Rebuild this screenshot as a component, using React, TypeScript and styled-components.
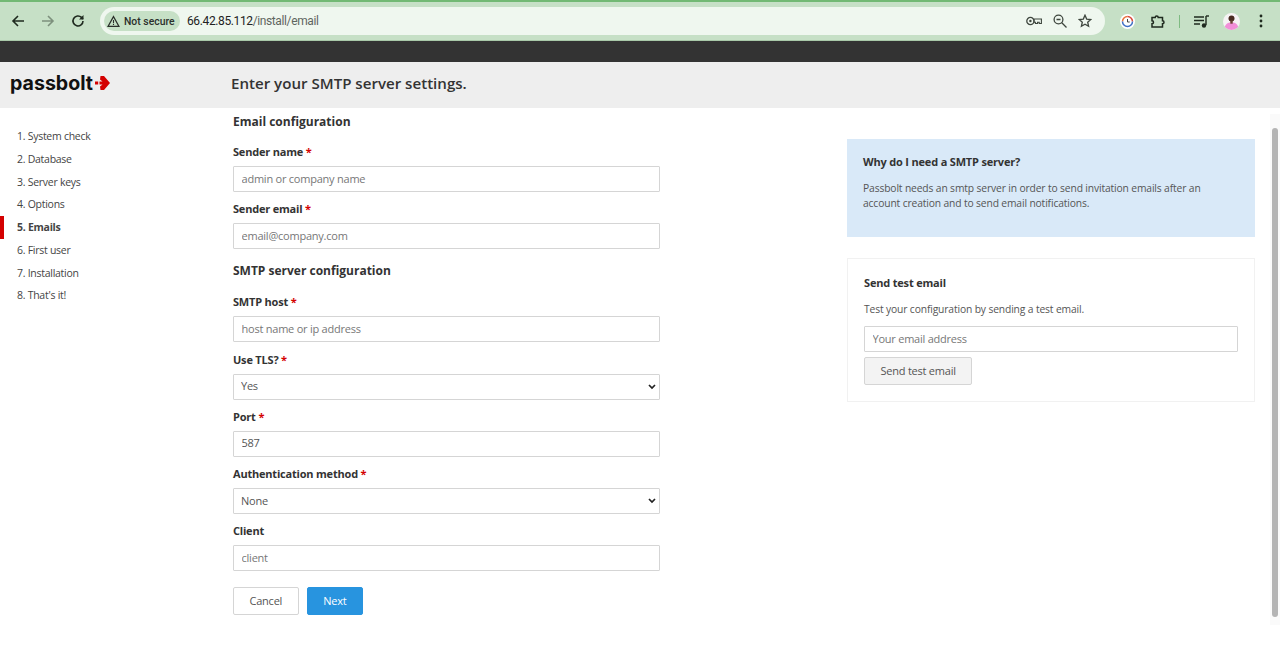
import React, { FC } from 'react';
import styled, { createGlobalStyle } from 'styled-components';

const GlobalStyle = createGlobalStyle`
  html, body {
    margin: 0;
    padding: 0;
    height: 100%;
    overflow: hidden;
    background: #fff;
  }
  * {
    box-sizing: border-box;
  }
  #root {
    font-family: "Open Sans", "Liberation Sans", sans-serif;
    color: #333;
  }
`;

const steps = ['System check', 'Database', 'Server keys', 'Options', 'Emails', 'First user', 'Installation', "That's it!"];

const chevron = `url("data:image/svg+xml,%3Csvg xmlns='http://www.w3.org/2000/svg' width='8' height='6' viewBox='0 0 8 6'%3E%3Cpath d='M1 1l3 3 3-3' fill='none' stroke='%23222' stroke-width='1.7'/%3E%3C/svg%3E")`;

const Page = styled.div`
  width: 1280px;
  height: 645px;
  display: flex;
  flex-direction: column;
  overflow: hidden;
`;

/* browser chrome */
const BrowserBar = styled.div`
  height: 41px;
  flex: none;
  background: #c6e0c6;
  border-top: 2px solid #72b974;
  border-bottom: 1px solid #a9c9a9;
  display: flex;
  align-items: center;
  padding: 0 8px 0 9px;
`;

const NavIcon = styled.svg<{ $gap?: number }>`
  width: 18px;
  height: 18px;
  flex: none;
  margin-right: ${({ $gap }) => $gap ?? 0}px;
  display: block;
`;

const Omnibox = styled.div`
  width: 1005px;
  height: 28px;
  border-radius: 14px;
  background: #eff7ef;
  display: flex;
  align-items: center;
  padding: 0 13px 0 4px;
  margin: 0 15px 0 0;
`;

const SecurityChip = styled.div`
  width: 76px;
  height: 20px;
  border-radius: 10px;
  background: #c6e0c6;
  display: flex;
  align-items: center;
  gap: 4px;
  padding: 0 0 0 3px;
  font-family: "Roboto", "Liberation Sans", sans-serif;
  font-size: 10.4px;
  font-weight: 500;
  color: #2b2f2b;
  white-space: nowrap;
`;

const Url = styled.div`
  margin-left: 7px;
  font-family: "Roboto", "Liberation Sans", sans-serif;
  font-size: 12px;
  letter-spacing: -0.38px;
  color: #5f665f;
  flex: 1;

  b {
    font-weight: 400;
    color: #222;
  }
`;

const OmniIcons = styled.div`
  display: flex;
  align-items: center;
  gap: 11px;
`;

const Divider = styled.div`
  width: 1px;
  height: 13px;
  background: #7fbb82;
  margin: 0 14px 0 13px;
`;

const Avatar = styled.svg`
  width: 17px;
  height: 17px;
  margin: 0 19px 0 14px;
  flex: none;
`;

const DarkStrip = styled.div`
  height: 21px;
  flex: none;
  background: #333;
`;

/* passbolt header */
const Header = styled.header`
  height: 46px;
  flex: none;
  background: #eee;
  display: flex;
  align-items: center;
  padding-bottom: 4px;
`;

const LogoBox = styled.div`
  width: 231px;
  flex: none;
  padding-left: 10px;
  display: flex;
  align-items: center;
  gap: 1px;
`;

const LogoText = styled.span`
  font-family: "Inter", "Liberation Sans", sans-serif;
  font-size: 19.6px;
  font-weight: 700;
  color: #111;
  line-height: 22px;
`;

const Title = styled.h1`
  margin: 0;
  font-size: 15.1px;
  font-weight: 600;
  color: #333;
`;

/* body */
const Body = styled.div`
  flex: 1;
  display: flex;
  min-height: 0;
`;

const StepList = styled.ol`
  list-style: none;
  margin: 0;
  padding: 17px 0 0;
  width: 233px;
  flex: none;
`;

const Step = styled.li<{ $active?: boolean }>`
  height: 22.75px;
  line-height: 22.75px;
  padding-left: ${({ $active }) => ($active ? 13 : 17)}px;
  font-size: 10.5px;
  letter-spacing: -0.27px;
  font-weight: ${({ $active }) => ($active ? 700 : 400)};
  color: #444;
  border-left: ${({ $active }) => ($active ? '4px solid #d40101' : 'none')};
`;

const Form = styled.form`
  width: 427px;
  flex: none;
  padding-top: 6px;
`;

const SectionTitle = styled.h2<{ $top?: number; $bottom: number }>`
  margin: ${({ $top }) => $top ?? 0}px 0 ${({ $bottom }) => $bottom}px;
  font-size: 12px;
  font-weight: 700;
  line-height: 16px;
  color: #333;
`;

const Field = styled.div`
  margin-bottom: 9.25px;
`;

const Label = styled.label`
  display: block;
  font-size: 11px;
  letter-spacing: -0.2px;
  font-weight: 700;
  line-height: 16px;
  margin-bottom: 6px;
  color: #333;

  i {
    font-style: normal;
    color: #d40101;
  }
`;

const Input = styled.input`
  display: block;
  width: 100%;
  height: 26px;
  border: 1px solid #d5d5d5;
  border-radius: 1px;
  background: #fff;
  padding: 0 8px 2px 7.5px;
  font-family: inherit;
  font-size: 11px;
  letter-spacing: -0.23px;
  color: #555;
  outline: none;

  &::placeholder {
    color: #777;
    opacity: 1;
  }
`;

const Select = styled.select`
  display: block;
  width: 100%;
  height: 26px;
  border: 1px solid #d5d5d5;
  border-radius: 1px;
  appearance: none;
  background: #fff ${chevron} no-repeat right 3px center;
  padding: 0 7px 2px;
  font-family: inherit;
  font-size: 11px;
  letter-spacing: -0.23px;
  color: #555;
  outline: none;
`;

const Actions = styled.div`
  display: flex;
  gap: 8px;
  margin-top: 16px;
`;

const Button = styled.button<{ $primary?: boolean; $muted?: boolean }>`
  height: 28px;
  padding: 0 15.5px 2px;
  border-radius: 2px;
  font-family: inherit;
  font-size: 11px;
  letter-spacing: -0.23px;
  border: 1px solid ${({ $primary }) => ($primary ? '#2894df' : '#d5d5d5')};
  background: ${({ $primary, $muted }) => ($primary ? '#2894df' : $muted ? '#f3f3f3' : '#fff')};
  color: ${({ $primary }) => ($primary ? '#fff' : '#555')};
`;

const Aside = styled.aside`
  width: 408px;
  flex: none;
  margin-left: 187px;
  padding-top: 31px;
`;

const Note = styled.section`
  height: 98px;
  background: #d9e9f8;
  padding: 15px 16px;
  margin-bottom: 21px;
`;

const TestCard = styled.section`
  height: 144px;
  border: 1px solid #f1f1f1;
  padding: 16px;
`;

const BoxTitle = styled.h3`
  margin: 0 0 11px;
  font-size: 11px;
  letter-spacing: -0.18px;
  font-weight: 700;
  line-height: 16px;
  color: #333;
`;

const BoxText = styled.p<{ $bottom?: number }>`
  margin: 0 0 ${({ $bottom }) => $bottom ?? 0}px;
  font-size: 10.3px;
  letter-spacing: -0.14px;
  line-height: 15px;
  color: #555;
`;

const TestInput = styled(Input)`
  margin-bottom: 5px;
`;

const ScrollTrack = styled.div`
  width: 10px;
  flex: none;
  margin-left: 15px;
  margin-top: 6px;
  height: 511px;
  padding: 14px 2px 0;
  background: #fafafa;
`;

const ScrollThumb = styled.div`
  width: 6px;
  height: 489px;
  border-radius: 3px;
  background: #b4b4b4;
`;

const fields: { label: string; required?: boolean; placeholder?: string; value?: string; options?: string }[] = [
  { label: 'SMTP host', required: true, placeholder: 'host name or ip address' },
  { label: 'Use TLS?', required: true, options: 'Yes' },
  { label: 'Port', required: true, value: '587' },
  { label: 'Authentication method', required: true, options: 'None' },
  { label: 'Client', placeholder: 'client' }
];

const FormField: FC<{ label: string; required?: boolean; placeholder?: string; value?: string; options?: string }> = ({
  label,
  required,
  placeholder,
  value,
  options
}) => (
  <Field>
    <Label>
      {label} {required && <i>*</i>}
    </Label>
    {options ? (
      <Select defaultValue={options}>
        <option>{options}</option>
      </Select>
    ) : (
      <Input placeholder={placeholder} defaultValue={value} />
    )}
  </Field>
);

const BrowserChrome: FC = () => (
  <BrowserBar>
    <NavIcon viewBox="0 0 18 18" $gap={12}>
      <path d="M15 9H4M9 4L4 9l5 5" fill="none" stroke="#1f2a1f" strokeWidth="1.6" />
    </NavIcon>
    <NavIcon viewBox="0 0 18 18" $gap={12}>
      <path d="M3 9h11M9 4l5 5-5 5" fill="none" stroke="#7d907d" strokeWidth="1.6" />
    </NavIcon>
    <NavIcon viewBox="0 0 18 18" $gap={13}>
      <path d="M14 9a5 5 0 1 1-1.5-3.6L14 7" fill="none" stroke="#1f2a1f" strokeWidth="1.6" />
      <path d="M14.5 3v4.5H10z" fill="#1f2a1f" />
    </NavIcon>
    <Omnibox>
      <SecurityChip>
        <svg width="13" height="13" viewBox="0 0 13 13">
          <path d="M6.5 1.6L12 11.4H1z" fill="none" stroke="#2b2f2b" strokeWidth="1.2" />
          <path d="M6.5 5v3.2M6.5 9.1v1" stroke="#2b2f2b" strokeWidth="1.1" />
        </svg>
        Not secure
      </SecurityChip>
      <Url>
        <b>66.42.85.112</b>/install/email
      </Url>
      <OmniIcons>
        <svg width="16" height="12" viewBox="0 0 16 12">
          <circle cx="4.4" cy="6" r="3.6" fill="none" stroke="#3e463e" strokeWidth="1.3" />
          <circle cx="4.4" cy="6" r="1.2" fill="#3e463e" />
          <path d="M8 4h7.400v4.500h-2.200V7.200h-1.700v1.300H9.400V7.200H8z" fill="none" stroke="#3e463e" strokeWidth="1.1" />
        </svg>
        <svg width="14" height="14" viewBox="0 0 14 14">
          <circle cx="5.500" cy="5.500" r="4.400" fill="none" stroke="#3e463e" strokeWidth="1.3" />
          <path d="M3.500 5.500h4M8.800 8.800l4.700 4.700" stroke="#3e463e" strokeWidth="1.3" />
        </svg>
        <svg width="14" height="14" viewBox="0 0 14 14">
          <path d="M7 1.200l1.700 3.900 4.100.4-3.100 2.700.9 4.100L7 10.200l-3.600 2.100.9-4.100-3.100-2.700 4.100-.4z" fill="none" stroke="#3e463e" strokeWidth="1.3" />
        </svg>
      </OmniIcons>
    </Omnibox>
    <svg width="15" height="15" viewBox="0 0 15 15" style={{ marginRight: 15 }}>
      <circle cx="7.500" cy="7.500" r="7.500" fill="#fff" />
      <path d="M2.500 7.500a5 5 0 0 1 5-5" fill="none" stroke="#e8743b" strokeWidth="1.500" />
      <path d="M7.500 2.500a5 5 0 0 1 5 5" fill="none" stroke="#d9483b" strokeWidth="1.500" />
      <path d="M12.500 7.500a5 5 0 0 1-10 0" fill="none" stroke="#3f6fc6" strokeWidth="1.500" />
      <path d="M7.500 5v3h2.200" fill="none" stroke="#444" strokeWidth="1" />
    </svg>
    <svg width="16" height="16" viewBox="0 0 16 16">
      <path d="M2 4.500h3.200a1.500 1.500 0 0 1 3 0h4.300v3.200a1.500 1.500 0 0 1 0 3v3.300H2v-3.200a1.500 1.500 0 0 0 0-3z" fill="none" stroke="#1f2a1f" strokeWidth="1.500" />
    </svg>
    <Divider />
    <svg width="15" height="13" viewBox="0 0 15 13">
      <path d="M0 2h10M0 5.500h10M0 9h6" stroke="#1f2a1f" strokeWidth="1.400" />
      <path d="M12 1v9" stroke="#1f2a1f" strokeWidth="1.400" />
      <path d="M12 1h3" stroke="#1f2a1f" strokeWidth="1.400" />
      <circle cx="10" cy="10.500" r="2.200" fill="#1f2a1f" />
    </svg>
    <Avatar viewBox="0 0 17 17">
      <defs>
        <clipPath id="avatar-clip">
          <circle cx="8.500" cy="8.500" r="8.500" />
        </clipPath>
      </defs>
      <g clipPath="url(#avatar-clip)">
        <rect width="17" height="17" fill="#f6f3f4" />
        <path d="M1.500 17c0-6 3-7.500 7-7.500s7 1.500 7 7.500z" fill="#f28fd8" />
        <circle cx="8.500" cy="5.500" r="3" fill="#4a2c22" />
        <rect x="7.300" y="7.500" width="2.400" height="3.200" fill="#6a4334" />
      </g>
    </Avatar>
    <svg width="4" height="14" viewBox="0 0 4 14">
      <circle cx="2" cy="2" r="1.400" fill="#1f2a1f" />
      <circle cx="2" cy="7" r="1.400" fill="#1f2a1f" />
      <circle cx="2" cy="12" r="1.400" fill="#1f2a1f" />
    </svg>
  </BrowserBar>
);

const LogoMark: FC = () => (
  <svg width="16" height="14" viewBox="0 0 16 14">
    <path d="M6.500 0h3.500L16 7l-6 7H6.500l-.5-3.500L8.500 8.500H5.500v-3h3L6 3.500z" fill="#d40101" />
    <rect x="1" y="5.500" width="3.200" height="3" fill="#d40101" />
  </svg>
);

export default function App() {
  return (
    <Page>
      <GlobalStyle />
      <BrowserChrome />
      <DarkStrip />
      <Header>
        <LogoBox>
          <LogoText>passbolt</LogoText>
          <LogoMark />
        </LogoBox>
        <Title>Enter your SMTP server settings.</Title>
      </Header>
      <Body>
        <StepList>
          {steps.map((step, i) => (
            <Step key={step} $active={i === 4}>
              {i + 1}. {step}
            </Step>
          ))}
        </StepList>
        <Form>
          <SectionTitle $bottom={14}>Email configuration</SectionTitle>
          <FormField label="Sender name" required placeholder="admin or company name" />
          <FormField label="Sender email" required placeholder="email@company.com" />
          <SectionTitle $top={14} $bottom={15}>SMTP server configuration</SectionTitle>
          {fields.map((field) => (
            <FormField key={field.label} {...field} />
          ))}
          <Actions>
            <Button type="button">Cancel</Button>
            <Button type="button" $primary>
              Next
            </Button>
          </Actions>
        </Form>
        <Aside>
          <Note>
            <BoxTitle>Why do I need a SMTP server?</BoxTitle>
            <BoxText>
              Passbolt needs an smtp server in order to send invitation emails after an
              <br />
              account creation and to send email notifications.
            </BoxText>
          </Note>
          <TestCard>
            <BoxTitle>Send test email</BoxTitle>
            <BoxText $bottom={9}>Test your configuration by sending a test email.</BoxText>
            <TestInput placeholder="Your email address" />
            <Button type="button" $muted>
              Send test email
            </Button>
          </TestCard>
        </Aside>
        <ScrollTrack>
          <ScrollThumb />
        </ScrollTrack>
      </Body>
    </Page>
  );
}
